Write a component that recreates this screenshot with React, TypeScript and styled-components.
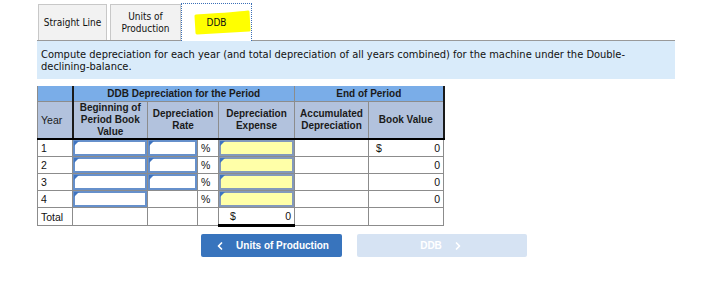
import styled, { createGlobalStyle } from "styled-components";
import { ChevronLeft, ChevronRight } from "lucide-react";

const GlobalStyle = createGlobalStyle`
  body {
    margin: 0;
    background: #fff;
    font-family: "Liberation Sans", Arial, sans-serif;
    color: #000;
  }
`;

const Page = styled.div`
  padding: 4px 0 0 37px;
`;

const TabBar = styled.div`
  display: flex;
  align-items: flex-end;
  width: 638px;
  height: 37px;
  padding-left: 1px;
  box-sizing: border-box;
  border-bottom: 1px solid #999;
`;

const Tab = styled.div<{ width: number; gap?: number }>`
  width: ${({ width }) => width}px;
  height: 36px;
  margin-right: ${({ gap }) => gap ?? 0}px;
  box-sizing: border-box;
  display: flex;
  align-items: center;
  justify-content: center;
  text-align: center;
  background: #f2f2f2;
  border: 1px solid #c8c8c8;
  border-bottom: none;
  font-family: "DejaVu Sans Condensed", "DejaVu Sans", sans-serif;
  font-size: 10px;
  line-height: 12px;
  color: #111;
`;

const ActiveTab = styled(Tab)`
  position: relative;
  height: 38px;
  margin-bottom: -1px;
  background: #fff;
  border: 1px dotted #3a6fb7;
  border-bottom: none;
`;

const Highlight = styled.svg`
  position: absolute;
  left: 0;
  top: 0;
`;

const TabLabel = styled.span`
  position: relative;
`;

const Info = styled.div`
  width: 638px;
  box-sizing: border-box;
  background: #d9ebfa;
  padding: 8px 38px 6px 4px;
  font-family: "DejaVu Sans Condensed", "DejaVu Sans", sans-serif;
  font-size: 11px;
  line-height: 12px;
  color: #111;
`;

const Table = styled.table`
  margin-top: 7px;
  border-collapse: collapse;
  table-layout: fixed;
  font-size: 10.5px;
`;

const HeadTop = styled.th<{ dark?: boolean; light?: boolean }>`
  height: 15px;
  padding: 0;
  background: #7aade8;
  font-weight: bold;
  font-size: 10px;
  color: #1a1a1a;
  border: 1px solid #8c8c8c;
  border-top: none;
  border-left: ${({ dark, light }) =>
    dark ? "2px solid #1a1a1a" : light ? "1px solid #dce8f7" : "1px solid #8c8c8c"};
  border-right: ${({ light }) => (light ? "2px solid #1a1a1a" : "1px solid #8c8c8c")};
`;

const HeadSub = styled.th<{ dark?: boolean; last?: boolean }>`
  height: 35px;
  padding: 0 2px;
  background: #b2c2dd;
  font-weight: bold;
  font-size: 10px;
  color: #1a1a1a;
  line-height: 12px;
  border: 1px solid #8c8c8c;
  border-bottom: 2px solid #000;
  border-left: ${({ dark }) => (dark ? "2px solid #1a1a1a" : "1px solid #8c8c8c")};
  border-right: ${({ last }) => (last ? "2px solid #1a1a1a" : "1px solid #8c8c8c")};
`;

const YearHead = styled(HeadSub)`
  text-align: left;
  font-weight: normal;
  font-size: 10.5px;
  padding-left: 3px;
`;

const Cell = styled.td<{ align?: string; heavy?: boolean }>`
  height: 16px;
  padding: 0 3px;
  border: 1px solid #8c8c8c;
  text-align: ${({ align }) => align ?? "left"};
  border-bottom: ${({ heavy }) => (heavy ? "3px solid #000" : "1px solid #8c8c8c")};
  color: #111;
`;

const InputCell = styled.td`
  height: 16px;
  padding: 0;
  border: 1px solid #8c8c8c;
`;

const Field = styled.div<{ tone?: "yellow" }>`
  position: relative;
  height: 16px;
  box-sizing: border-box;
  background: ${({ tone }) => (tone === "yellow" ? "#ffffa8" : "#fff")};
  border: 2px solid ${({ tone }) => (tone === "yellow" ? "#8399bb" : "#6690cb")};
  &::before {
    content: "";
    position: absolute;
    left: -1px;
    top: -1px;
    border-top: 5px solid #3f74c0;
    border-right: 5px solid transparent;
  }
`;

const Money = styled.div<{ pad?: number }>`
  display: flex;
  justify-content: space-between;
  padding-left: ${({ pad }) => pad ?? 4}px;
`;

const Buttons = styled.div`
  display: flex;
  gap: 15px;
  margin: 7px 0 0 164px;
`;

const NavButton = styled.button<{ disabled?: boolean; width: number }>`
  width: ${({ width }) => width}px;
  height: 23px;
  border: none;
  border-radius: 2px;
  display: flex;
  align-items: center;
  justify-content: center;
  gap: 10px;
  padding: 0;
  background: ${({ disabled }) => (disabled ? "#d6e3f3" : "#3874bd")};
  color: #fff;
  font-family: "Liberation Sans", Arial, sans-serif;
  font-weight: bold;
  font-size: 10px;
  cursor: ${({ disabled }) => (disabled ? "default" : "pointer")};
`;

const rows = [
  { year: "1", rate: true, dollar: true },
  { year: "2", rate: true },
  { year: "3", rate: true },
  { year: "4", rate: false },
];

export default function App() {
  return (
    <Page>
      <GlobalStyle />
      <TabBar>
        <Tab width={69} gap={3}>Straight Line</Tab>
        <Tab width={71}>
          Units of
          <br />
          Production
        </Tab>
        <ActiveTab width={71}>
          <Highlight width="71" height="38" viewBox="0 0 71 38">
            <path
              d="M14 12 C30 11 50 10 66 8 L67 26 C50 27 32 28 15 29 Z"
              fill="#ffff00"
              stroke="#ffff00"
              strokeWidth="3"
              strokeLinejoin="round"
            />
          </Highlight>
          <TabLabel>DDB</TabLabel>
        </ActiveTab>
      </TabBar>
      <Info>
        Compute depreciation for each year (and total depreciation of all years combined) for the
        machine under the Double-declining-balance.
      </Info>
      <Table>
        <colgroup>
          <col style={{ width: 35 }} />
          <col style={{ width: 75 }} />
          <col style={{ width: 50 }} />
          <col style={{ width: 21 }} />
          <col style={{ width: 76 }} />
          <col style={{ width: 74 }} />
          <col style={{ width: 75 }} />
        </colgroup>
        <thead>
          <tr>
            <HeadTop />
            <HeadTop colSpan={4} dark>
              DDB Depreciation for the Period
            </HeadTop>
            <HeadTop colSpan={2} light>
              End of Period
            </HeadTop>
          </tr>
          <tr>
            <YearHead>Year</YearHead>
            <HeadSub dark>Beginning of Period Book Value</HeadSub>
            <HeadSub colSpan={2}>Depreciation Rate</HeadSub>
            <HeadSub>Depreciation Expense</HeadSub>
            <HeadSub>Accumulated Depreciation</HeadSub>
            <HeadSub last>Book Value</HeadSub>
          </tr>
        </thead>
        <tbody>
          {rows.map((r) => (
            <tr key={r.year}>
              <Cell>{r.year}</Cell>
              <InputCell>
                <Field />
              </InputCell>
              {r.rate ? (
                <InputCell>
                  <Field />
                </InputCell>
              ) : (
                <Cell />
              )}
              <Cell>%</Cell>
              <InputCell>
                <Field tone="yellow" />
              </InputCell>
              <Cell />
              <Cell>
                <Money pad={4}>
                  <span>{r.dollar ? "$" : ""}</span>
                  <span>0</span>
                </Money>
              </Cell>
            </tr>
          ))}
          <tr>
            <Cell>Total</Cell>
            <Cell />
            <Cell />
            <Cell />
            <Cell heavy>
              <Money pad={8}>
                <span>$</span>
                <span>0</span>
              </Money>
            </Cell>
            <Cell />
            <Cell />
          </tr>
        </tbody>
      </Table>
      <Buttons>
        <NavButton width={141}>
          <ChevronLeft size={12} strokeWidth={3.5} />
          Units of Production
        </NavButton>
        <NavButton width={170} disabled>
          DDB
          <ChevronRight size={12} strokeWidth={3.5} />
        </NavButton>
      </Buttons>
    </Page>
  );
}
